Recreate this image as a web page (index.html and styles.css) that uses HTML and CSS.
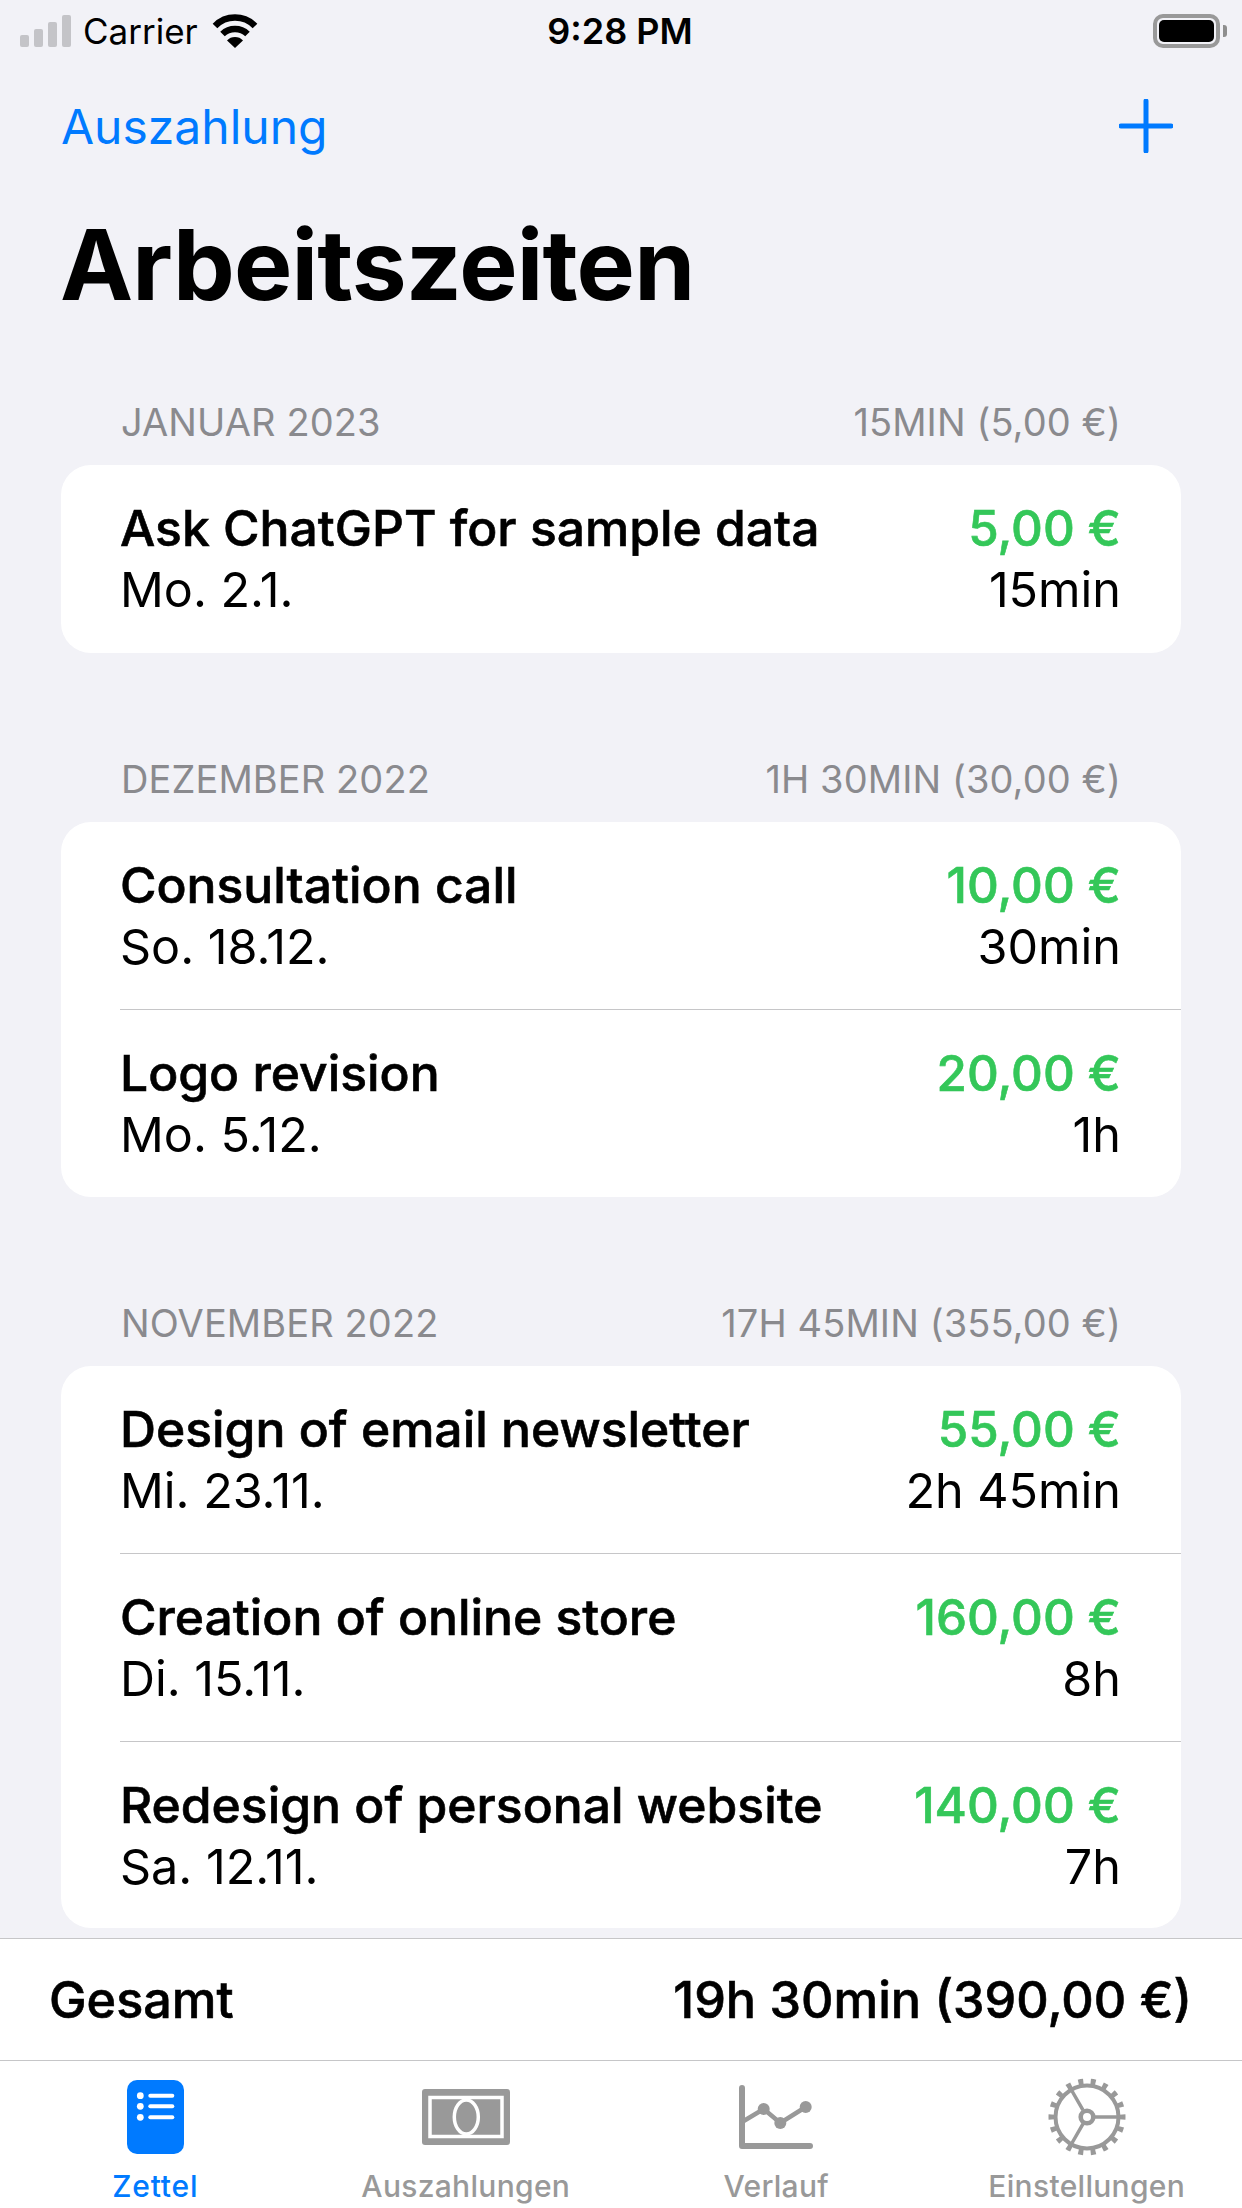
FILE: index.html
```html
<!DOCTYPE html>
<html lang="de">
<head>
    <meta charset="UTF-8">
    <title>Arbeitszeiten</title>
    <link rel="stylesheet" href="styles.css">
</head>
<body>
    <div class="app">
        <div class="status-bar">
            <div class="status-left">
                <div class="signal">
                    <span class="bar bar-1"></span>
                    <span class="bar bar-2"></span>
                    <span class="bar bar-3"></span>
                    <span class="bar bar-4"></span>
                </div>
                <span class="carrier">Carrier</span>
                <svg class="wifi" width="46" height="34" viewBox="0 0 46 34">
                    <path d="M3 12 A28 28 0 0 1 43 12" fill="none" stroke="#000" stroke-width="6.5"/>
                    <path d="M10.500 20 A18 18 0 0 1 35.500 20" fill="none" stroke="#000" stroke-width="6.500"/>
                    <path d="M15 26.500 A11 11 0 0 1 31 26.500 L23 34 Z" fill="#000"/>
                </svg>
            </div>
            <div class="status-time">9:28 PM</div>
            <div class="status-right">
                <div class="battery"><span class="battery-fill"></span></div>
                <span class="battery-nub"></span>
            </div>
        </div>

        <div class="nav-bar">
            <a class="nav-link">Auszahlung</a>
            <svg class="plus" width="54" height="54" viewBox="0 0 54 54">
                <path d="M27 2 V52 M2 27 H52" stroke="#007aff" stroke-width="5" stroke-linecap="round"/>
            </svg>
        </div>

        <h1 class="page-title">Arbeitszeiten</h1>

        <main class="list">
            <section class="group">
                <div class="group-head">
                    <span>JANUAR 2023</span>
                    <span>15MIN (5,00 €)</span>
                </div>
                <div class="card">
                    <div class="row">
                        <div class="row-line"><span class="job">Ask ChatGPT for sample data</span><span class="amount">5,00 €</span></div>
                        <div class="row-line"><span>Mo. 2.1.</span><span>15min</span></div>
                    </div>
                </div>
            </section>

            <section class="group">
                <div class="group-head">
                    <span>DEZEMBER 2022</span>
                    <span>1H 30MIN (30,00 €)</span>
                </div>
                <div class="card">
                    <div class="row">
                        <div class="row-line"><span class="job">Consultation call</span><span class="amount">10,00 €</span></div>
                        <div class="row-line"><span>So. 18.12.</span><span>30min</span></div>
                    </div>
                    <div class="row">
                        <div class="row-line"><span class="job">Logo revision</span><span class="amount">20,00 €</span></div>
                        <div class="row-line"><span>Mo. 5.12.</span><span>1h</span></div>
                    </div>
                </div>
            </section>

            <section class="group">
                <div class="group-head">
                    <span>NOVEMBER 2022</span>
                    <span>17H 45MIN (355,00 €)</span>
                </div>
                <div class="card">
                    <div class="row">
                        <div class="row-line"><span class="job">Design of email newsletter</span><span class="amount">55,00 €</span></div>
                        <div class="row-line"><span>Mi. 23.11.</span><span>2h 45min</span></div>
                    </div>
                    <div class="row">
                        <div class="row-line"><span class="job">Creation of online store</span><span class="amount">160,00 €</span></div>
                        <div class="row-line"><span>Di. 15.11.</span><span>8h</span></div>
                    </div>
                    <div class="row">
                        <div class="row-line"><span class="job">Redesign of personal website</span><span class="amount">140,00 €</span></div>
                        <div class="row-line"><span>Sa. 12.11.</span><span>7h</span></div>
                    </div>
                </div>
            </section>
        </main>

        <div class="total-bar">
            <span>Gesamt</span>
            <span>19h 30min (390,00 €)</span>
        </div>

        <nav class="tab-bar">
            <div class="tab tab-active">
                <svg width="57" height="74" viewBox="0 0 57 74">
                    <rect width="57" height="74" rx="10" fill="#007aff"/>
                    <g fill="#fff">
                        <circle cx="13.300" cy="15.700" r="3.400"/>
                        <circle cx="13.300" cy="26.300" r="3.400"/>
                        <circle cx="13.300" cy="37.300" r="3.400"/>
                        <rect x="21.300" y="13.700" width="26" height="4" rx="2"/>
                        <rect x="21.300" y="24.300" width="26" height="4" rx="2"/>
                        <rect x="21.300" y="35.300" width="26" height="4" rx="2"/>
                    </g>
                </svg>
                <span>Zettel</span>
            </div>
            <div class="tab">
                <svg width="88" height="56" viewBox="0 0 88 56">
                    <rect width="88" height="56" rx="3" fill="#999"/>
                    <rect x="8" y="8.500" width="72" height="39" fill="none" stroke="#fff" stroke-width="3.500"/>
                    <ellipse cx="44.300" cy="28" rx="12" ry="17" fill="#999" stroke="#fff" stroke-width="3.500"/>
                </svg>
                <span>Auszahlungen</span>
            </div>
            <div class="tab">
                <svg width="74" height="64" viewBox="0 0 74 64">
                    <path d="M3 3 V61 H71" fill="none" stroke="#999" stroke-width="6" stroke-linecap="round" stroke-linejoin="round"/>
                    <path d="M3 37 L24.700 24 L41.300 38 L66.700 22" fill="none" stroke="#999" stroke-width="4.500"/>
                    <circle cx="24.700" cy="24" r="6" fill="#999"/>
                    <circle cx="41.300" cy="38" r="6" fill="#999"/>
                    <circle cx="66.700" cy="22" r="6" fill="#999"/>
                </svg>
                <span>Verlauf</span>
            </div>
            <div class="tab">
                <svg width="78" height="78" viewBox="-39 -39 78 78">
                    <circle r="35.500" fill="none" stroke="#999" stroke-width="6" pathLength="180" stroke-dasharray="4 6" stroke-dashoffset="2"/>
                    <circle r="31.500" fill="none" stroke="#999" stroke-width="4"/>
                    <path d="M8 0 H30 M-4 -6.900 L-15 -26 M-4 6.900 L-15 26" stroke="#999" stroke-width="3.500"/>
                    <circle r="6.300" fill="#fff" stroke="#999" stroke-width="4.600"/>
                </svg>
                <span>Einstellungen</span>
            </div>
        </nav>
    </div>
</body>
</html>
```

FILE: styles.css
```css
* {
    box-sizing: border-box;
}
body {
    margin: 0;
    background: #f2f2f7;
    color: #000;
    font-family: Inter, "Liberation Sans", sans-serif;
}
.app {
    display: flex;
    flex-direction: column;
    width: 1242px;
    height: 2208px;
    overflow: hidden;
}

/* status bar */
.status-bar {
    display: grid;
    grid-template-columns: 1fr auto 1fr;
    align-items: center;
    height: 60px;
    padding: 2px 15px 0 20px;
    font-size: 35px;
}
.status-left {
    display: flex;
    align-items: center;
}
.signal {
    display: flex;
    align-items: flex-end;
    gap: 5px;
    height: 32px;
    margin-right: 12px;
}
.bar {
    width: 9px;
    border-radius: 2px;
    background: #c4c4c8;
}
.bar-1 { height: 12px; }
.bar-2 { height: 18px; }
.bar-3 { height: 25px; }
.bar-4 { height: 32px; }
.wifi {
    margin-left: 14px;
}
.status-time {
    margin-right: 7px;
    font-size: 36px;
    font-weight: 600;
}
.status-right {
    display: flex;
    align-items: center;
    justify-content: flex-end;
}
.battery {
    width: 67px;
    height: 34px;
    padding: 2px;
    border: 4px solid #999;
    border-radius: 10px;
}
.battery-fill {
    display: block;
    height: 100%;
    border-radius: 5px;
    background: #000;
}
.battery-nub {
    width: 4px;
    height: 12px;
    margin-left: 3px;
    border-radius: 0 3px 3px 0;
    background: #8e8e8e;
}

/* nav */
.nav-bar {
    display: flex;
    align-items: center;
    justify-content: space-between;
    height: 132px;
    padding: 0 69px 0 61px;
}
.nav-link {
    color: #007aff;
    font-size: 48px;
}
.page-title {
    margin: 13px 0 0;
    padding-left: 60px;
    font-size: 98px;
    font-weight: 700;
    line-height: 120px;
    letter-spacing: -0.8px;
}

/* list */
.list {
    flex: 1;
    min-height: 0;
    padding: 73px 61px 0;
}
.group {
    margin-bottom: 102px;
}
.group:last-child {
    margin-bottom: 0;
}
.group-head {
    display: flex;
    justify-content: space-between;
    align-items: center;
    height: 48px;
    margin-bottom: 19px;
    padding: 0 60px;
    color: #8a8a8e;
    font-size: 38px;
    letter-spacing: 0.1px;
}
.card {
    overflow: hidden;
    border-radius: 30px;
    background: #fff;
}
.row {
    height: 187.5px;
    margin-left: 59px;
    padding: 33px 60px 0 0;
    border-top: 1px solid #c6c6c8;
}
.row:first-child {
    border-top: 0;
}
.row-line {
    display: flex;
    justify-content: space-between;
    height: 61px;
    font-size: 48.5px;
    line-height: 61px;
}
/* Inter has no weight between 500 and 600 here, the stroke fills the gap */
.job {
    font-size: 49.8px;
    font-weight: 500;
    -webkit-text-stroke: 0.6px;
}
.amount {
    color: #34c759;
    font-size: 49.3px;
    font-weight: 500;
    -webkit-text-stroke: 0.6px;
}

/* bottom bars */
.total-bar {
    display: flex;
    justify-content: space-between;
    align-items: center;
    height: 122px;
    padding: 0 50px 0 49px;
    border-top: 1px solid #c6c6c8;
    background: #fff;
    font-size: 50.3px;
    font-weight: 500;
    -webkit-text-stroke: 0.6px;
}
.tab-bar {
    display: grid;
    grid-template-columns: repeat(4, 1fr);
    height: 148px;
    border-top: 1px solid #c6c6c8;
    background: #fff;
}
.tab {
    position: relative;
    display: flex;
    align-items: center;
    justify-content: center;
    height: 112px;
    color: #999;
    font-size: 30px;
    font-weight: 500;
    letter-spacing: 0.3px;
}
.tab span {
    position: absolute;
    left: 0;
    right: 0;
    top: 107px;
    text-align: center;
}
.tab-active {
    color: #007aff;
    letter-spacing: 0.8px;
}
```
